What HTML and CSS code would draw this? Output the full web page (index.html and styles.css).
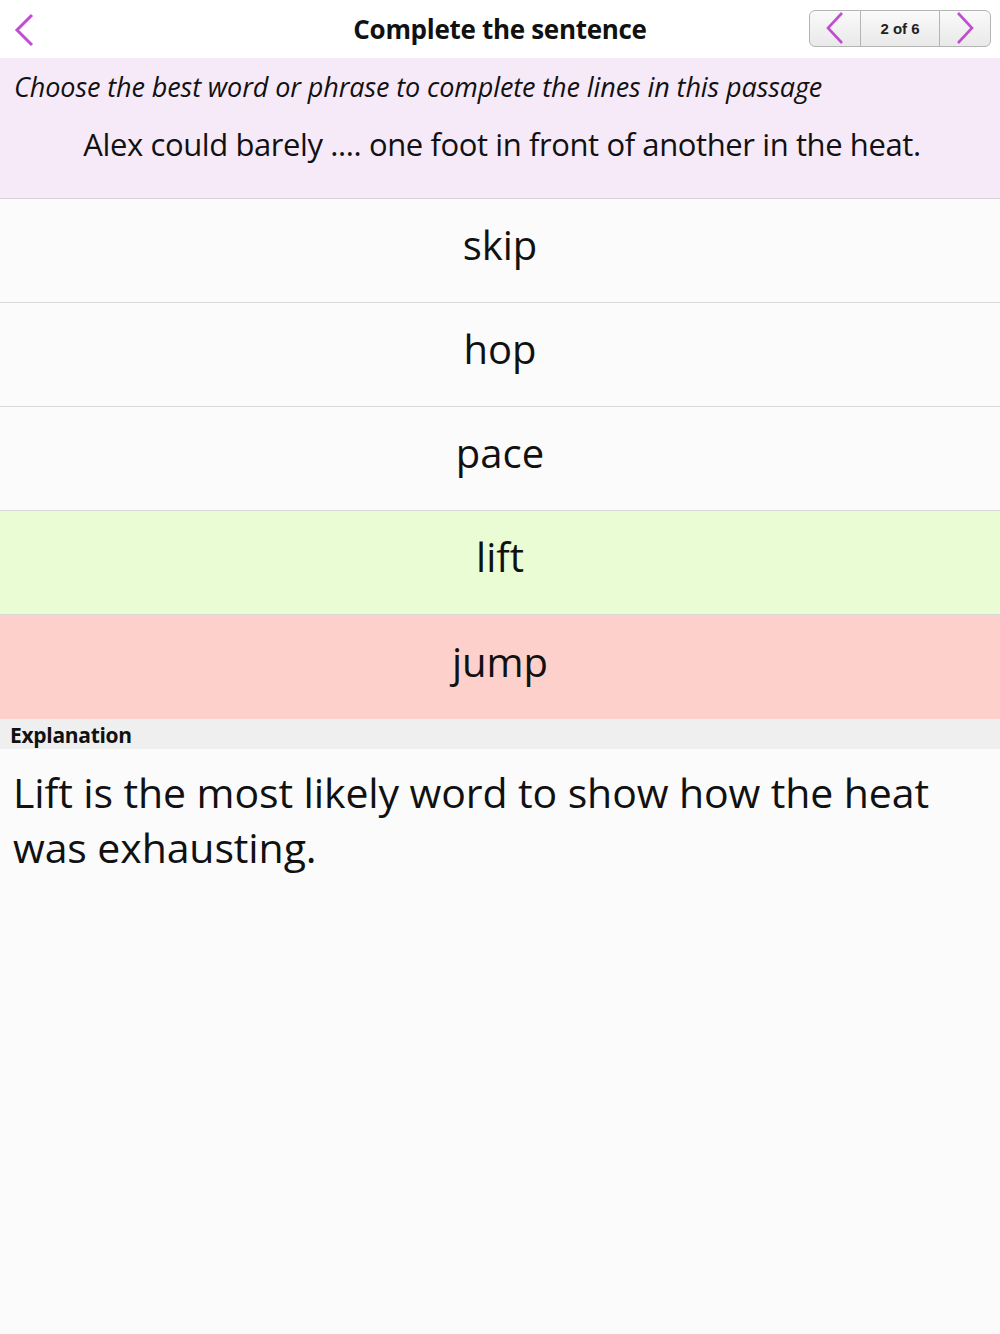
FILE: index.html
```html
<!DOCTYPE html>
<html lang="en">
<head>
<meta charset="utf-8">
<title>Complete the sentence</title>
<link rel="stylesheet" href="styles.css">
</head>
<body>
<header class="topbar">
	<div class="back">
		<svg width="24" height="36" viewBox="0 0 24 36"><polyline points="20,3 5,18 20,33" fill="none" stroke="#c04ed0" stroke-width="3"/></svg>
	</div>
	<div class="title">Complete the sentence</div>
	<div class="pager">
		<div class="seg arrow">
			<svg width="22" height="34" viewBox="0 0 22 34"><polyline points="18,2 4,17 18,32" fill="none" stroke="#c04ed0" stroke-width="2.6"/></svg>
		</div>
		<div class="seg count">2 of 6</div>
		<div class="seg arrow">
			<svg width="22" height="34" viewBox="0 0 22 34"><polyline points="4,2 18,17 4,32" fill="none" stroke="#c04ed0" stroke-width="2.6"/></svg>
		</div>
	</div>
</header>

<section class="question">
	<div class="instruction">Choose the best word or phrase to complete the lines in this passage</div>
	<div class="sentence">Alex could barely .... one foot in front of another in the heat.</div>
</section>

<section class="answers">
	<div class="answer">skip</div>
	<div class="answer">hop</div>
	<div class="answer">pace</div>
	<div class="answer correct">lift</div>
	<div class="answer wrong">jump</div>
</section>

<div class="explain-head">Explanation</div>
<div class="explain-body">Lift is the most likely word to show how the heat was exhausting.</div>
</body>
</html>
```

FILE: styles.css
```css
body { margin:0; background:#fbfbfb; font-family:"Open Sans", "Noto Sans", sans-serif; color:#111; }

.topbar { height:58px; background:#fff; display:grid; grid-template-columns:1fr auto 1fr; align-items:center; padding:0 9px 0 12px; }
.back { display:flex; align-items:center; padding-top:2px; }
.title { font-size:26px; font-weight:700; letter-spacing:-0.3px; margin-left:-3px; }
.pager { justify-self:end; display:flex; height:35px; border:1px solid #b4b4b4; border-radius:6px; background:linear-gradient(#fafafa, #e9e9e9); overflow:hidden; margin-top:-2px; }
.seg { display:flex; align-items:center; justify-content:center; }
.arrow { width:50px; }
.count { width:78px; border-left:1px solid #b4b4b4; border-right:1px solid #b4b4b4; font-family:"Liberation Sans", Arial, sans-serif; font-weight:700; font-size:15px; color:#222; }

.question { background:#f6e9f8; height:141px; border-bottom:1px solid #d8d0da; padding:12px 14px 0; box-sizing:border-box; }
.instruction { font-style:italic; font-size:27px; letter-spacing:-0.1px; line-height:34px; }
.sentence { text-align:center; font-size:31px; letter-spacing:-0.4px; line-height:40px; margin-top:20px; padding-left:4px; }

.answer { height:104px; display:flex; align-items:center; justify-content:center; font-size:40px; border-bottom:1px solid #d8d8d8; box-sizing:border-box; padding-bottom:12px; }
.answer.correct { background:#eafcd4; }
.answer.wrong { background:#fdd0cb; border-bottom:none; }

.explain-head { background:#efefef; height:30px; font-size:21px; font-weight:700; padding-left:10px; line-height:32px; letter-spacing:-0.3px; }
.explain-body { font-size:41px; line-height:55px; padding:16px 13px 0; max-width:940px; letter-spacing:-0.1px; }
```
